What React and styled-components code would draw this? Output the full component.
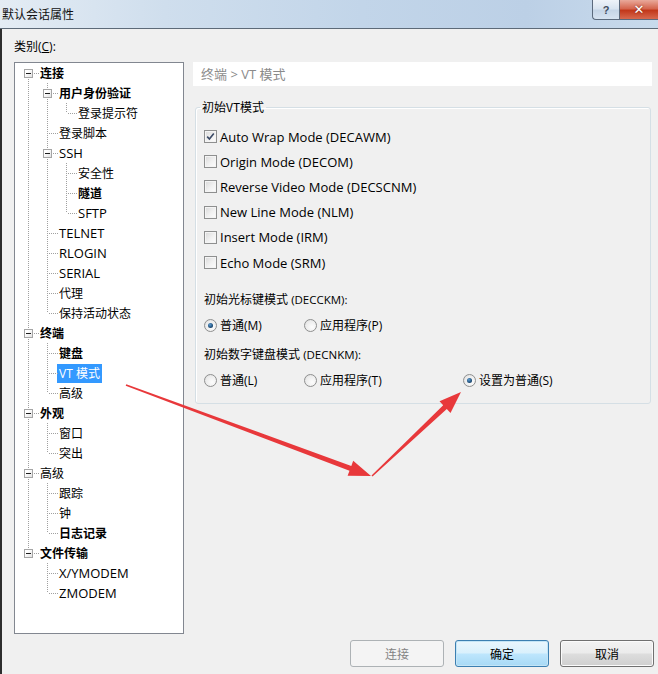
import React from "react";
import styled, { createGlobalStyle, css } from "styled-components";

const GlobalStyle = createGlobalStyle`
  html, body {
    margin: 0;
    padding: 0;
    background: #f0f0f0;
  }
  body {
    font-family: "Open Sans", "Noto Sans CJK SC", sans-serif;
    font-size: 12px;
    color: #000;
  }
`;

const categories = [
  {
    label: "连接",
    bold: true,
    children: [
      { label: "用户身份验证", bold: true, children: [{ label: "登录提示符" }] },
      { label: "登录脚本" },
      {
        label: "SSH",
        children: [{ label: "安全性" }, { label: "隧道", bold: true }, { label: "SFTP" }],
      },
      { label: "TELNET" },
      { label: "RLOGIN" },
      { label: "SERIAL" },
      { label: "代理" },
      { label: "保持活动状态" },
    ],
  },
  {
    label: "终端",
    bold: true,
    children: [{ label: "键盘", bold: true }, { label: "VT 模式", selected: true }, { label: "高级" }],
  },
  { label: "外观", bold: true, children: [{ label: "窗口" }, { label: "突出" }] },
  {
    label: "高级",
    children: [{ label: "跟踪" }, { label: "钟" }, { label: "日志记录", bold: true }],
  },
  { label: "文件传输", bold: true, children: [{ label: "X/YMODEM" }, { label: "ZMODEM" }] },
];

const hasCjk = (s) => /[\u4e00-\u9fff]/.test(s);

// walk the tree into rows, remembering which ancestor rails keep going
function flatten(nodes, depth = 0, rails = [], out = []) {
  nodes.forEach((node, i) => {
    const last = i === nodes.length - 1;
    out.push({ ...node, depth, rails, last, first: depth === 0 && i === 0, hasKids: !!node.children });
    if (node.children) flatten(node.children, depth + 1, [...rails, !last], out);
  });
  return out;
}

const rows = flatten(categories);

const checks = [
  { label: "Auto Wrap Mode (DECAWM)", checked: true },
  { label: "Origin Mode (DECOM)" },
  { label: "Reverse Video Mode (DECSCNM)" },
  { label: "New Line Mode (NLM)" },
  { label: "Insert Mode (IRM)" },
  { label: "Echo Mode (SRM)" },
];

// arrow polygon: thin tail widening towards a pointed head
function arrowPoints(x1, y1, x2, y2) {
  const dx = x2 - x1;
  const dy = y2 - y1;
  const len = Math.hypot(dx, dy);
  const ux = dx / len;
  const uy = dy / len;
  const nx = -uy;
  const ny = ux;
  const hx = x2 - 22 * ux;
  const hy = y2 - 22 * uy;
  const p = (x, y, w) => `${(x + w * nx).toFixed(1)},${(y + w * ny).toFixed(1)}`;
  return [
    p(x1, y1, 0.8),
    p(hx, hy, 2.6),
    p(hx, hy, 8),
    `${x2},${y2}`,
    p(hx, hy, -8),
    p(hx, hy, -2.6),
    p(x1, y1, -0.8),
  ].join(" ");
}

const Window = styled.div`
  position: relative;
  width: 658px;
  height: 674px;
  display: flex;
  flex-direction: column;
  overflow: hidden;
`;

const TitleBar = styled.div`
  height: 28px;
  display: flex;
  align-items: flex-start;
  background: linear-gradient(to right, #e4ecf4 0%, #cfdeed 25%, #c2d5e9 55%, #bcd0e6 80%, #c8daec 100%);
  border-bottom: 1px solid #5d6a78;
`;

const Title = styled.div`
  flex: 1;
  padding: 6px 0 0 2px;
  line-height: 15px;
  font-family: "Noto Sans CJK SC", sans-serif;
  color: #111;
`;

const CaptionButton = styled.div`
  height: 19px;
  display: flex;
  align-items: center;
  justify-content: center;
  border: 1px solid #5b6a7d;
  border-top: none;
  color: #fff;
  font-weight: bold;
  ${(p) =>
    p.$close
      ? css`
          width: 38px;
          border-right: none;
          background: linear-gradient(to bottom, #e9a99b 0%, #d5664f 45%, #c2381b 55%, #d8694e 100%);
          font-family: "DejaVu Sans", sans-serif;
          font-size: 13px;
          text-shadow: 0 0 2px #6d1d0c;
        `
      : css`
          width: 26px;
          border-radius: 0 0 0 4px;
          border-right: none;
          background: linear-gradient(to bottom, #eef3f9 0%, #d9e4f0 45%, #c5d5e7 55%, #d6e3f1 100%);
          color: #3f4d5f;
          font-family: "Liberation Sans", sans-serif;
          font-size: 11px;
        `}
`;

const Body = styled.div`
  flex: 1;
  display: flex;
  flex-direction: column;
  border-left: 2px solid #2d2d2d;
  background: #f0f0f0;
`;

const Main = styled.div`
  display: grid;
  grid-template-columns: 170px 1fr;
  grid-template-rows: auto auto;
  column-gap: 9px;
  padding: 9px 6px 0 12px;
`;

const FieldLabel = styled.div`
  grid-column: 1 / 2;
  height: 18px;
  line-height: 18px;
  margin-bottom: 6px;
  u {
    text-decoration: underline;
  }
`;

const Tree = styled.div`
  grid-column: 1 / 2;
  height: 570px;
  background: #fff;
  border: 1px solid #828790;
  padding-left: 4px;
`;

const Row = styled.div`
  display: flex;
  align-items: center;
  height: 20px;
`;

const dots = css`
  position: absolute;
  content: "";
`;

const Rail = styled.div`
  position: relative;
  width: 19px;
  height: 20px;
  flex: none;
  ${(p) =>
    p.$on &&
    css`
      &::before {
        ${dots};
        left: 9px;
        top: 0;
        bottom: 0;
        width: 1px;
        background: repeating-linear-gradient(to bottom, #a0a0a0 0 1px, transparent 1px 2px);
      }
    `}
`;

const Branch = styled.div`
  position: relative;
  width: 19px;
  height: 20px;
  flex: none;
  &::before {
    ${dots};
    left: 9px;
    width: 1px;
    top: ${(p) => (p.$first ? "10px" : "0")};
    bottom: ${(p) => (p.$last ? "10px" : "0")};
    background: repeating-linear-gradient(to bottom, #a0a0a0 0 1px, transparent 1px 2px);
  }
  &::after {
    ${dots};
    left: 10px;
    right: -1px;
    top: 10px;
    height: 1px;
    background: repeating-linear-gradient(to right, transparent 0 1px, #a0a0a0 1px 2px);
  }
`;

const Expander = styled.span`
  position: absolute;
  z-index: 1;
  left: 5px;
  top: 6px;
  width: 7px;
  height: 7px;
  border: 1px solid #a5a5a5;
  background: linear-gradient(135deg, #ffffff 30%, #e2e2e2 100%);
  &::after {
    content: "";
    position: absolute;
    left: 1px;
    top: 3px;
    width: 5px;
    height: 1px;
    background: #1f1f1f;
  }
`;

const NodeLabel = styled.span`
  padding: 0 2px;
  height: 19px;
  line-height: 19px;
  white-space: nowrap;
  font-size: ${(p) => (p.$latin ? 13 : 12)}px;
  font-weight: ${(p) => (p.$bold ? 700 : 400)};
  ${(p) =>
    p.$selected &&
    css`
      background: #3399ff;
      color: #fff;
    `}
`;

const RightColumn = styled.div`
  grid-column: 2 / 3;
  display: flex;
  flex-direction: column;
`;

const Crumb = styled.div`
  height: 24px;
  line-height: 24px;
  padding-left: 8px;
  background: #fff;
  color: #8a8a8a;
  font-size: 13px;
`;

const Group = styled.fieldset`
  margin: 13px 1px 0 2px;
  padding: 9px 8px 8px 8px;
  border: 1px solid #d5dfe5;
  border-radius: 3px;
  box-shadow: inset 1px 1px 0 #fff;
  min-width: 0;
`;

const Legend = styled.legend`
  padding: 0 2px;
  margin-left: -4px;
  line-height: 16px;
  font-family: "Noto Sans CJK SC", sans-serif;
`;

const CheckRow = styled.label`
  display: flex;
  align-items: center;
  gap: 3px;
  height: 25.2px;
  font-size: 13px;
`;

const Box = styled.span`
  position: relative;
  width: 11px;
  height: 11px;
  flex: none;
  border: 1px solid #8e8f8f;
  background: linear-gradient(135deg, #d8d8d8 0%, #f1f1f1 55%, #fdfdfd 100%);
  box-shadow: inset 0 0 0 1px #f4f4f4;
  svg {
    position: absolute;
    left: 1px;
    top: 1px;
  }
`;

const Caption = styled.div`
  height: 20px;
  line-height: 20px;
  margin-top: ${(p) => p.$gap}px;
`;

const Code = styled.span`
  font-size: 11.5px;
`;

const RadioRow = styled.div`
  display: grid;
  grid-template-columns: 100px 159px auto;
  height: 30px;
  align-items: center;
`;

const RadioLabel = styled.label`
  display: flex;
  align-items: center;
  gap: 3px;
  white-space: nowrap;
`;

const Dot = styled.span`
  position: relative;
  width: 11px;
  height: 11px;
  flex: none;
  border: 1px solid #8e8f8f;
  border-radius: 50%;
  background: radial-gradient(circle at 65% 65%, #fdfdfd 0%, #ececec 60%, #d6d6d6 100%);
  ${(p) =>
    p.$on &&
    css`
      &::after {
        content: "";
        position: absolute;
        left: 3px;
        top: 3px;
        width: 5px;
        height: 5px;
        border-radius: 50%;
        background: radial-gradient(circle at 40% 35%, #5f9ed3 0%, #1f4f7a 60%, #0f2b47 100%);
      }
    `}
`;

const Footer = styled.div`
  margin-top: auto;
  display: flex;
  justify-content: flex-end;
  gap: 11px;
  padding: 0 4px 7px 0;
`;

const Button = styled.button`
  width: 94px;
  height: 27px;
  border-radius: 3px;
  font-family: "Noto Sans CJK SC", sans-serif;
  font-size: 12px;
  color: #000;
  border: 1px solid #707070;
  background: linear-gradient(to bottom, #f2f2f2 0%, #ebebeb 49%, #dddddd 51%, #cfcfcf 100%);
  box-shadow: inset 0 0 0 1px #fbfbfb;
  ${(p) =>
    p.disabled &&
    css`
      border-color: #adb2b5;
      background: #f4f4f4;
      color: #838383;
      box-shadow: none;
    `}
  ${(p) =>
    p.$focus &&
    css`
      border-color: #3c7fb1;
      background: linear-gradient(to bottom, #eaf6fd 0%, #d9f0fc 49%, #bee6fd 51%, #a7d9f5 100%);
      box-shadow: inset 0 0 0 1px #c4e5f6;
    `}
`;

const Overlay = styled.svg`
  position: absolute;
  left: 0;
  top: 0;
  pointer-events: none;
`;

function Check({ checked }) {
  return (
    <Box>
      {checked && (
        <svg width="9" height="9" viewBox="0 0 9 9">
          <path d="M1.2 4.6 L3.4 7 L7.8 1.4" fill="none" stroke="#3b4a66" strokeWidth="1.6" />
        </svg>
      )}
    </Box>
  );
}

function Radio({ on, children }) {
  return (
    <RadioLabel>
      <Dot $on={on} />
      {children}
    </RadioLabel>
  );
}

export default function App() {
  return (
    <Window>
      <GlobalStyle />
      <TitleBar>
        <Title>默认会话属性</Title>
        <CaptionButton>?</CaptionButton>
        <CaptionButton $close>✕</CaptionButton>
      </TitleBar>
      <Body>
        <Main>
          <FieldLabel>
            类别(<u>C</u>):
          </FieldLabel>
          <Tree>
            {rows.map((row, i) => (
              <Row key={i}>
                {row.rails.map((on, k) => (
                  <Rail key={k} $on={on} />
                ))}
                <Branch $first={row.first} $last={row.last}>
                  {row.hasKids && <Expander />}
                </Branch>
                <NodeLabel $bold={row.bold} $selected={row.selected} $latin={!hasCjk(row.label)}>
                  {row.label}
                </NodeLabel>
              </Row>
            ))}
          </Tree>
          <RightColumn>
            <Crumb>终端 &gt; VT 模式</Crumb>
            <Group>
              <Legend>初始VT模式</Legend>
              {checks.map((c) => (
                <CheckRow key={c.label}>
                  <Check checked={c.checked} />
                  {c.label}
                </CheckRow>
              ))}
              <Caption $gap={15}>
                初始光标键模式 <Code>(DECCKM):</Code>
              </Caption>
              <RadioRow>
                <Radio on>普通(M)</Radio>
                <Radio>应用程序(P)</Radio>
              </RadioRow>
              <Caption $gap={5}>
                初始数字键盘模式 <Code>(DECNKM):</Code>
              </Caption>
              <RadioRow>
                <Radio>普通(L)</Radio>
                <Radio>应用程序(T)</Radio>
                <Radio on>设置为普通(S)</Radio>
              </RadioRow>
            </Group>
          </RightColumn>
        </Main>
        <Footer>
          <Button disabled>连接</Button>
          <Button $focus>确定</Button>
          <Button>取消</Button>
        </Footer>
      </Body>
      <Overlay width="658" height="674">
        <polygon points={arrowPoints(126, 385, 371, 476)} fill="#e8383b" />
        <polygon points={arrowPoints(372, 476, 461, 392)} fill="#e8383b" />
      </Overlay>
    </Window>
  );
}
